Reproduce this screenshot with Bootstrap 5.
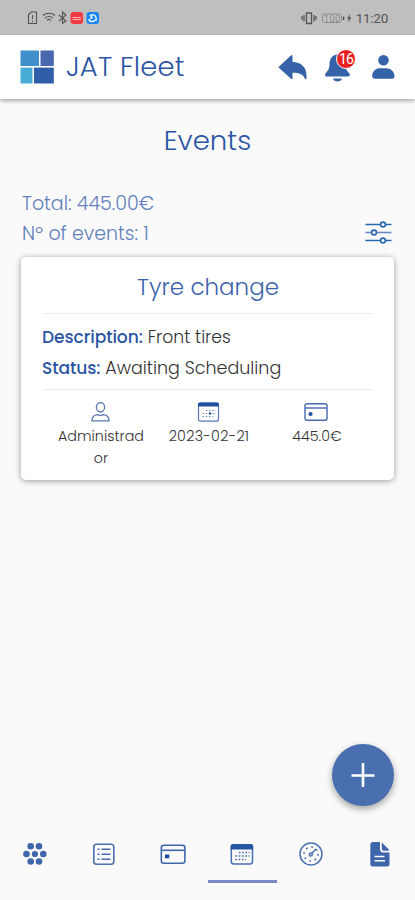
<!DOCTYPE html>
<html lang="en">
<head>
<meta charset="utf-8">
<meta name="viewport" content="width=device-width, initial-scale=1">
<title>JAT Fleet - Events</title>
<link href="https://cdn.jsdelivr.net/npm/bootstrap@5.3.0/dist/css/bootstrap.min.css" rel="stylesheet">
<style>
:root{--fleet:#2a55a3;--fleet-soft:#5f80bd}
body{font-family:Poppins,Inter,"Open Sans",sans-serif;font-weight:300;background:#fafafa;color:#333}
svg{display:block;flex:none}
.screen{height:900px;overflow:hidden}
.statusbar{height:35px;background:#bfbfbf;padding:1px 27px 0;color:#555}
.clock{font:400 13.5px/20px Roboto,sans-serif;letter-spacing:-.25px}
.topbar{height:64px;background:#fff;box-shadow:0 2px 4px rgba(0,0,0,.32);padding:0 20px;color:var(--fleet)}
.brand{font-size:27.4px;line-height:40px;margin-left:12px;letter-spacing:.2px}
.bell-count{position:absolute;left:13px;top:-3px;width:20px;height:20px;background:#e5201f;border:1px solid #fff;font:400 14px/18px Roboto,sans-serif;letter-spacing:-.9px}
.account{margin-left:18px}
.heading{font-size:27.6px;line-height:40px;margin:22px 0 28px;color:var(--fleet)}
.summary{padding:0 23px 8px 22px;font-size:19px;line-height:30px;color:var(--fleet-soft)}
.event-card{margin:0 21px;height:223px;border-radius:5px;background:#fff;box-shadow:0 1px 6px rgba(0,0,0,.38);padding:15px 20px 0 21px}
.event-title{font-size:23px;line-height:30px;color:#3b63ab}
.rule{height:1px;background:#ececec;margin:0 1px}
.rule-title{margin-top:11px;margin-bottom:8px}
.rule-meta{margin-top:5px}
.field{font-size:17.5px;line-height:31px;white-space:nowrap}
.field b{font-weight:500;font-size:17.1px;letter-spacing:-.08px;color:var(--fleet)}
.field-short span{font-size:17.2px}
.meta{padding:12px 1px 0 5px;font-size:14.3px;line-height:22px}
.meta-item{width:108px}
.meta-item svg{margin-bottom:3px}
.date{letter-spacing:.3px}
.fab{width:62px;height:62px;margin-right:21px;background:#4a6fb0;box-shadow:0 3px 7px rgba(0,0,0,.36)}
.tabs{height:94px}
.tab-cell{height:77px;padding-top:22px;border-bottom:3px solid transparent;flex:1 1 0}
.tab-cell.current{border-color:#7b8cc4}
</style>
<script src="https://cdn.jsdelivr.net/npm/bootstrap@5.3.0/dist/js/bootstrap.bundle.min.js"></script>
</head>
<body>
<div class="screen d-flex flex-column">
  <div class="statusbar d-flex align-items-center">
    <svg width="73" height="16" viewBox="0 0 73 16" fill="none" stroke="#555" stroke-width="1.1">
      <path d="M1.500 4.500L4.500 2H9.500V13.500H1.500ZM5.500 5V9M5.500 10.500V12"/>
      <path d="M16 5.500C19 2.500 25 2.500 28 5.500M18 8C20 6 24 6 26 8M20 10.200C21 9.400 23 9.400 24 10.200"/>
      <path d="M22 12.300h.1" stroke-width="2"/>
      <path d="M32 5L39 11L35.500 13.500V2L39 5L32 11"/>
      <rect x="43.500" y="2" width="12.500" height="12" rx="3" fill="#f03a43" stroke="none"/>
      <path d="M45.500 7.500H54M45.500 9.500H54" stroke="#ffb5b9"/>
      <rect x="59.500" y="2" width="12.500" height="12" rx="3" fill="#1686f5" stroke="none"/>
      <path d="M63 5L65 7.500L63 9M64 5C68 4 70 7 69 11M62 9C62 12 66 12.500 68 10" stroke="#e8f4ff" stroke-width="1.500"/>
    </svg>
    <svg class="ms-auto me-1" width="51" height="16" viewBox="0 0 51 16" fill="none" stroke="#555">
      <path d="M5.500 3H10.500V13.500H5.500Z" stroke-width="1.300"/><path d="M3 5V11.500M1 6V10M13 5V11.500M15 6V10" stroke-width="1.300"/>
      <rect x="21.500" y="4" width="19" height="8.500" rx="2" stroke="#777" stroke-dasharray="2 1"/><path d="M42.500 6.500V10" stroke-width="1.500"/>
      <text x="23" y="11.500" font-family="Roboto,sans-serif" font-size="8.500" fill="#666" stroke="none" textLength="16">100</text>
      <path d="M49 4L46 8.800H48L47 12.500L50.500 7.500H48.500Z" fill="#555" stroke="none"/>
    </svg>
    <span class="clock">11:20</span>
  </div>

  <header class="topbar d-flex align-items-center flex-shrink-0">
    <svg width="34" height="34" viewBox="0 0 34 34">
      <path fill="#3f8fcb" d="M.5 .5H19V16H.5Z"/><path fill="#4868b0" d="M20.500 .5H33.800V16H20.500Z"/>
      <path fill="#49acd6" d="M.5 17.600H12.500V33.500H.5Z"/><path fill="#2f5daa" d="M14 17.600H33.800V33.500H14Z"/>
    </svg>
    <span class="brand">JAT Fleet</span>
    <svg class="ms-auto" width="30" height="28" viewBox="0 0 30 28" fill="#3562a9"><path d="M1.300 14.200L14.200 2.300Q15.500 1.500 15.500 3.300V9C24 9.200 29.500 14 29.500 22.500V26H28C26.500 21.500 22.500 19.800 15.500 19.800V25.200Q15.500 27 14 25.800Z"/></svg>
    <div class="position-relative ms-3">
      <svg width="30" height="30" viewBox="0 0 30 30" fill="#3562a9"><path d="M14 2.500C8 3.500 6.500 8 6.500 12.500C6.500 17.500 4 19.500 2.500 21.500C1.500 23.500 2.500 24.500 4 24.500H25C27 24.500 27.500 22.500 26 21C24 19 22.500 17 22.500 12.500C22.500 7 20 3 14 2.500ZM10 26.500H19C18 30.500 11 30.500 10 26.500Z"/></svg>
      <span class="bell-count rounded-circle text-white text-center">16</span>
    </div>
    <svg class="account" width="24" height="26" viewBox="0 0 24 26" fill="#3562a9"><circle cx="12.500" cy="6.200" r="5.300"/><path d="M1.200 21.500C1.500 17 5 14.300 9 14.300H15C20 14.300 23 17.500 23.500 22C23.500 24 22.800 24.700 21 24.700H4C2 24.700 1.200 23.800 1.200 21.500Z"/></svg>
  </header>

  <h1 class="heading text-center fw-light">Events</h1>

  <section class="summary d-flex justify-content-between align-items-end">
    <div><div>Total: 445.00€</div><div>Nº of events: 1</div></div>
    <svg class="mb-1" width="27" height="25" viewBox="0 0 27 25" fill="#fafafa" stroke="#2867ad" stroke-width="1.600">
      <path d="M.5 4.500H26.500M.5 20.500H26.500"/><path d="M.5 12.500H26.500" stroke="#6f88c0"/>
      <circle cx="18" cy="4.500" r="2.400"/><circle cx="9" cy="12.500" r="2.400"/><circle cx="18" cy="20.500" r="2.400"/>
    </svg>
  </section>

  <article class="event-card flex-shrink-0">
    <h2 class="event-title text-center fw-light mb-0">Tyre change</h2>
    <div class="rule rule-title"></div>
    <div class="field field-short"><b>Description:</b> <span>Front tires</span></div>
    <div class="field"><b>Status:</b> <span>Awaiting Scheduling</span></div>
    <div class="rule rule-meta"></div>
    <div class="meta d-flex text-center">
      <div class="meta-item d-flex flex-column align-items-center">
        <svg width="22" height="20" viewBox="0 0 22 20" fill="none" stroke="#5876b4" stroke-width="1.300"><ellipse cx="10.500" cy="5.300" rx="4.100" ry="4.700"/><path d="M2 18.800C2 15 4.500 13 7.500 12.700Q10.500 14 13.500 12.700C16.500 13 19 15 19 18.800Z"/></svg>
        <span>Administrad<br>or</span>
      </div>
      <div class="meta-item d-flex flex-column align-items-center">
        <svg width="24" height="20" viewBox="0 0 24 20" fill="none" stroke="#5876b4" stroke-width="1.200"><rect x="1.500" y="1" width="20" height="18.200" rx="2"/><path d="M1 4.500V2Q1 .5 3 .5H20Q22 .5 22 2V4.500Z" fill="#1e4f9e" stroke="none"/><path d="M9 8.500H19M5.500 11.500H19M5.500 14.500H16" stroke-dasharray="1.300 2"/><circle cx="13" cy="11.500" r="1.200" fill="#1e4f9e" stroke="none"/></svg>
        <span class="date">2023-02-21</span>
      </div>
      <div class="meta-item d-flex flex-column align-items-center">
        <svg width="26" height="20" viewBox="0 0 26 20" fill="none" stroke="#4769ad" stroke-width="1.400"><rect x="1" y="1.700" width="22" height="16.600" rx="2"/><path d="M1 6H23"/><circle cx="6.500" cy="12" r="2.100" fill="#1e4f9e" stroke="none"/></svg>
        <span>445.0€</span>
      </div>
    </div>
  </article>

  <button class="fab btn rounded-circle border-0 p-0 mt-auto ms-auto flex-shrink-0 d-flex align-items-center justify-content-center" aria-label="Add event">
    <svg width="26" height="26" viewBox="0 0 26 26" stroke="#fff" stroke-width="2.600"><path d="M13 1V25M1.500 13.500H24.500"/></svg>
  </button>

  <nav class="tabs d-flex align-items-start flex-shrink-0">
    <a class="tab-cell d-flex align-items-center justify-content-center" aria-label="Menu">
      <svg width="26" height="26" viewBox="0 0 26 26" fill="#3f66ab"><circle cx="8.700" cy="5.300" r="3.300"/><circle cx="17" cy="5.300" r="3.300"/><circle cx="4.500" cy="13" r="3.300"/><circle cx="12.900" cy="13" r="3.100"/><circle cx="21.300" cy="13" r="3.300"/><circle cx="8.700" cy="20.500" r="3.300"/><circle cx="17" cy="20.500" r="3.300"/></svg>
    </a>
    <a class="tab-cell d-flex align-items-center justify-content-center" aria-label="List">
      <svg width="26" height="26" viewBox="0 0 26 26" fill="none" stroke="#4a6fb0" stroke-width="1.600"><rect x="2.800" y="3.300" width="20" height="20" rx="2.800"/><path d="M6.500 8.300H8.500M6.500 13.300H8.500M6.500 18.300H8.500M10.500 8.300H19.500M10.500 13.300H19.500M10.500 18.300H19.500"/></svg>
    </a>
    <a class="tab-cell d-flex align-items-center justify-content-center" aria-label="Costs">
      <svg width="26" height="26" viewBox="0 0 26 26" fill="none" stroke="#3f66ab" stroke-width="1.600"><rect x="1.300" y="4.300" width="23.600" height="18" rx="2.500"/><path d="M1.300 9.300H24.900"/><path d="M5 13.500H9.300V17.300H5Z" fill="#1e4f9e" stroke="none"/></svg>
    </a>
    <a class="tab-cell current d-flex align-items-center justify-content-center" aria-label="Events">
      <svg width="26" height="26" viewBox="0 0 26 26" fill="none" stroke="#4a6fb0" stroke-width="1.500"><rect x="2.300" y="3.800" width="21.200" height="19.200" rx="2.500"/><path d="M1.600 8.500V6Q1.600 3 4.500 3H21.500Q24.200 3 24.200 6V8.500Z" fill="#2857a3" stroke="none"/><path d="M9.800 11.500H20.500M6.300 15H20.500M6.300 18.500H17" stroke-width="1.700" stroke-dasharray="1.700 1.600"/></svg>
    </a>
    <a class="tab-cell d-flex align-items-center justify-content-center" aria-label="Mileage">
      <svg width="26" height="26" viewBox="0 0 26 26" fill="none" stroke="#4a6fb0" stroke-width="1.500"><circle cx="13" cy="13" r="11"/><circle cx="13" cy="13" r="7" stroke-width="1.700" stroke-dasharray="1.700 3.800"/><circle cx="12.800" cy="13.500" r="1.500"/><path d="M14 12.300L18 8"/></svg>
    </a>
    <a class="tab-cell d-flex align-items-center justify-content-center" aria-label="Documents">
      <svg width="26" height="26" viewBox="0 0 26 26"><path fill="#3f66ab" d="M5.500 1H13V8Q13 11.500 16.500 11.500H22.500V23Q22.500 25.500 20 25.500H5.500Q3.300 25.500 3.300 23V3.500Q3.300 1 5.500 1ZM14.800 1.500L22 8.700Q22 9.700 21 9.700H16.500Q14.800 9.700 14.800 8Z"/><path stroke="#fff" stroke-width="1.600" d="M7.500 15.500H17.500M7.500 19.800H18"/></svg>
    </a>
  </nav>
</div>
</body>
</html>
